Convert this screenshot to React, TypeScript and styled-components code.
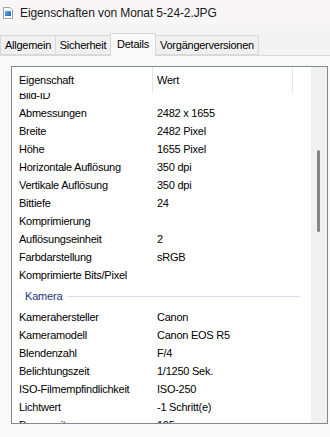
import styled, { createGlobalStyle } from 'styled-components';

const GlobalStyle = createGlobalStyle`
  body {
    margin: 0;
    background: #f3f3f3;
    font-family: "Liberation Sans", Arial, sans-serif;
  }
`;

type Row = { name: string; value?: string } | { group: string };

const ROWS: Row[] = [
  { name: 'Bild-ID' },
  { name: 'Abmessungen', value: '2482 x 1655' },
  { name: 'Breite', value: '2482 Pixel' },
  { name: 'Höhe', value: '1655 Pixel' },
  { name: 'Horizontale Auflösung', value: '350 dpi' },
  { name: 'Vertikale Auflösung', value: '350 dpi' },
  { name: 'Bittiefe', value: '24' },
  { name: 'Komprimierung' },
  { name: 'Auflösungseinheit', value: '2' },
  { name: 'Farbdarstellung', value: 'sRGB' },
  { name: 'Komprimierte Bits/Pixel' },
  { group: 'Kamera' },
  { name: 'Kamerahersteller', value: 'Canon' },
  { name: 'Kameramodell', value: 'Canon EOS R5' },
  { name: 'Blendenzahl', value: 'F/4' },
  { name: 'Belichtungszeit', value: '1/1250 Sek.' },
  { name: 'ISO-Filmempfindlichkeit', value: 'ISO-250' },
  { name: 'Lichtwert', value: '-1 Schritt(e)' },
  { name: 'Brennweite', value: '105 mm' },
];

const TABS = [
  { label: 'Allgemein', width: 56 },
  { label: 'Sicherheit', width: 56 },
  { label: 'Details', width: 46 },
  { label: 'Vorgängerversionen', width: 104 },
];

const FileIcon = () => (
  <svg width="10" height="12" viewBox="0 0 10 12">
    <path d="M0.5 0.5 H7 L9.5 3 V11.5 H0.5 Z" fill="#fff" stroke="#9aa3ad" />
    <defs>
      <linearGradient id="pic" x1="0" y1="0" x2="1" y2="1">
        <stop offset="0" stopColor="#5fb3f0" />
        <stop offset="1" stopColor="#1d5fb8" />
      </linearGradient>
    </defs>
    <rect x="2" y="4" width="6" height="5" fill="url(#pic)" />
  </svg>
);

const App = () => {
  return (
    <Window>
      <GlobalStyle />
      <TitleBar>
        <FileIcon />
        <Title>Eigenschaften von Monat 5-24-2.JPG</Title>
      </TitleBar>
      <TabStrip>
        {TABS.map((t) => (
          <Tab key={t.label} $active={t.label === 'Details'} $width={t.width}>
            {t.label}
          </Tab>
        ))}
      </TabStrip>
      <Panel>
        <ListBox>
          <Main>
            <Header>
              <HeaderCell $width={141}>Eigenschaft</HeaderCell>
              <HeaderCell $width={140} $inset={4}>
                Wert
              </HeaderCell>
            </Header>
            <Body>
              <Rows>
                {ROWS.map((r, i) =>
                  'group' in r ? (
                    <Group key={i}>
                      <span>{r.group}</span>
                      <GroupLine />
                    </Group>
                  ) : (
                    <ListRow key={i}>
                      <NameCell>{r.name}</NameCell>
                      <ValueCell>{r.value}</ValueCell>
                    </ListRow>
                  )
                )}
              </Rows>
            </Body>
          </Main>
          <ScrollTrack>
            <Thumb />
          </ScrollTrack>
        </ListBox>
      </Panel>
    </Window>
  );
};

export default App;

const Window = styled.div`
  width: 330px;
  height: 437px;
  overflow: hidden;
  display: flex;
  flex-direction: column;
  background: #f3f3f3;
`;

const TitleBar = styled.div`
  height: 25px;
  display: flex;
  align-items: center;
  gap: 7px;
  padding-left: 3px;
  background: #f9f6f7;
`;

const Title = styled.span`
  font-size: 12px;
  color: #1a1a1a;
  letter-spacing: -0.1px;
`;

const TabStrip = styled.div`
  height: 30px;
  display: flex;
  align-items: flex-end;
  position: relative;
  z-index: 1;
`;

const Tab = styled.div<{ $active?: boolean; $width: number }>`
  box-sizing: border-box;
  width: ${(p) => p.$width}px;
  height: ${(p) => (p.$active ? '23px' : '20px')};
  margin-bottom: ${(p) => (p.$active ? '-1px' : '0')};
  display: flex;
  align-items: center;
  justify-content: center;
  padding-bottom: ${(p) => (p.$active ? '3px' : '0')};
  font-size: 11px;
  letter-spacing: -0.25px;
  color: #000;
  background: ${(p) => (p.$active ? '#f9f9f9' : '#f0f0f0')};
  border: 1px solid #d9d9d9;
  border-bottom: ${(p) => (p.$active ? 'none' : '1px solid #d9d9d9')};
  margin-right: -1px;
`;

const Panel = styled.div`
  flex: 1;
  background: #f9f9f9;
  border-top: 1px solid #d9d9d9;
  padding: 10px 2px 0 11px;
`;

const ListBox = styled.div`
  box-sizing: border-box;
  height: 358px;
  display: flex;
  border: 1px solid #828790;
  background: #fff;
`;

const Main = styled.div`
  flex: 1;
  display: flex;
  flex-direction: column;
  overflow: hidden;
`;

const Header = styled.div`
  height: 26px;
  flex-shrink: 0;
  display: flex;
  background: #fff;
  position: relative;
  z-index: 1;
`;

const HeaderCell = styled.div<{ $width: number; $inset?: number }>`
  box-sizing: border-box;
  width: ${(p) => p.$width}px;
  display: flex;
  align-items: center;
  padding-left: ${(p) => p.$inset ?? 7}px;
  padding-bottom: 1px;
  border-right: 1px solid #e5e5e5;
  font-size: 11px;
  letter-spacing: -0.25px;
`;

const Body = styled.div`
  flex: 1;
  overflow: hidden;
`;

const Rows = styled.div`
  margin-top: -7px;
`;

const ListRow = styled.div`
  height: 18px;
  display: flex;
  align-items: center;
  font-size: 11px;
  letter-spacing: -0.25px;
  color: #000;
  white-space: nowrap;
`;

const NameCell = styled.div`
  box-sizing: border-box;
  width: 141px;
  padding-left: 7px;
  overflow: hidden;
`;

const ValueCell = styled.div`
  padding-left: 4px;
`;

const Group = styled.div`
  height: 24px;
  display: flex;
  align-items: center;
  gap: 5px;
  padding: 0 11px 0 13px;
  font-size: 11px;
  letter-spacing: -0.2px;
  color: #1e3287;
`;

const GroupLine = styled.div`
  flex: 1;
  height: 1px;
  background: #d5ddee;
`;

const ScrollTrack = styled.div`
  width: 16px;
  flex-shrink: 0;
  background: #f0f0f0;
`;

const Thumb = styled.div`
  width: 3px;
  height: 82px;
  margin: 83px 0 0 6px;
  border-radius: 2px;
  background: #858585;
`;
